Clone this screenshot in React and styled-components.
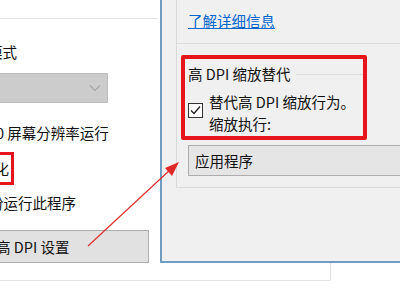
import React from "react";
import styled, { createGlobalStyle } from "styled-components";

const GlobalStyle = createGlobalStyle`
	html, body {
		margin: 0;
		padding: 0;
		background: #fff;
		overflow: hidden;
	}
	body {
		font-family: "Noto Sans CJK SC", "Noto Sans", sans-serif;
		color: #111;
	}
`;

const Page = styled.div`
	position: relative;
	width: 400px;
	height: 300px;
	overflow: hidden;
	display: flex;
	flex-direction: column;
	background: #fff;
	font-size: 14.5px;
`;

const Main = styled.div`
	display: flex;
	height: 263px;
`;

const LeftWindow = styled.div`
	width: 160px;
	flex-shrink: 0;
	display: flex;
	flex-direction: column;
	background: #fff;
`;

const TopRule = styled.div`
	width: 158px;
	height: 18px;
	border-bottom: 1px solid #e3e3e3;
`;

const Line = styled.div`
	height: 20px;
	line-height: 20px;
	white-space: nowrap;
	margin-top: ${(p) => p.$top}px;
	margin-left: ${(p) => p.$left}px;
`;

const DisabledSelect = styled.div`
	margin-top: 11px;
	margin-left: -10px;
	width: 118px;
	height: 30px;
	box-sizing: border-box;
	background: #cccccc;
	border: 1px solid #bdbdbd;
	display: flex;
	align-items: center;
	justify-content: flex-end;
	padding-right: 6px;
`;

const LeftMark = styled.div`
	margin-top: 9px;
	margin-left: -30px;
	width: 44px;
	height: 33px;
	box-sizing: border-box;
	border: 3px solid #e8141b;
	display: flex;
	align-items: center;
	justify-content: flex-end;
	padding-right: 2px;
	white-space: nowrap;
	overflow: hidden;
`;

const WideButton = styled.div`
	margin-top: 17px;
	margin-left: -50px;
	width: 199px;
	height: 33px;
	box-sizing: border-box;
	background: #e1e1e1;
	border: 1px solid #adadad;
	display: flex;
	align-items: center;
	padding-left: 16px;
	white-space: nowrap;
`;

const RightWindow = styled.div`
	flex: 1;
	box-sizing: border-box;
	background: #f0f0f0;
	border-left: 2px solid #6f9cc0;
	border-bottom: 2px solid #6f9cc0;
	overflow: hidden;
`;

const Group = styled.div`
	margin-left: 14px;
	border-left: 1px solid #d9d9d9;
	border-bottom: 1px solid #d9d9d9;
	padding-bottom: 11px;
`;

const LinkRow = styled.div`
	height: 44px;
	box-sizing: border-box;
	padding: 10px 0 0 11px;
	border-bottom: 1px solid #dcdcdc;
`;

const Link = styled.a`
	color: #0066cc;
	text-decoration: underline;
	line-height: 20px;
	cursor: pointer;
`;

const RedFrame = styled.div`
	margin: 11px 0 0 4px;
	width: 186px;
	height: 85px;
	box-sizing: border-box;
	border: 4px solid #e8141b;
	border-radius: 2px;
	padding: 5px 0 0 3px;
`;

const GroupTitle = styled.div`
	display: flex;
	align-items: center;
	height: 20px;
	line-height: 20px;
	white-space: nowrap;

	&::after {
		content: "";
		flex: 1;
		height: 1px;
		margin-left: 6px;
		background: #dcdcdc;
	}
`;

const CheckRow = styled.div`
	display: flex;
	align-items: flex-start;
	margin-top: 7px;
`;

const CheckBox = styled.div`
	width: 15px;
	height: 15px;
	flex-shrink: 0;
	box-sizing: border-box;
	margin-top: 12px;
	border: 1px solid #333;
	background: #fff;
	display: flex;
	align-items: center;
	justify-content: center;
`;

const CheckText = styled.div`
	margin-left: 6px;
	line-height: 22px;
	white-space: nowrap;
`;

const ModeSelect = styled.div`
	margin: 5px -20px 0 11px;
	height: 31px;
	box-sizing: border-box;
	background: #e5e5e5;
	border: 1px solid #adadad;
	display: flex;
	align-items: center;
	padding-left: 6px;
`;

const BottomStrip = styled.div`
	height: 37px;
`;

const BackButtonEdge = styled.div`
	width: 330px;
	height: 17px;
	border-right: 1px solid #e2e2e2;
	border-bottom: 1px solid #e2e2e2;
`;

const ArrowLayer = styled.svg`
	position: absolute;
	left: 0;
	top: 0;
	pointer-events: none;
`;

export default function App() {
	return (
		<>
			<GlobalStyle />
			<Page>
				<Main>
					<LeftWindow>
						<TopRule />
						<Line $top={23} $left={-12}>模式</Line>
						<DisabledSelect>
							<svg width="12" height="8" viewBox="0 0 12 8">
								<path d="M1 1.5 L6 6.5 L11 1.5" fill="none" stroke="#a8a8a8" strokeWidth="1.2" />
							</svg>
						</DisabledSelect>
						<Line $top={20} $left={-4}>0 屏幕分辨率运行</Line>
						<LeftMark>优化</LeftMark>
						<Line $top={8} $left={-11}>份运行此程序</Line>
						<WideButton>更改高 DPI 设置</WideButton>
					</LeftWindow>
					<RightWindow>
						<Group>
							<LinkRow>
								<Link>了解详细信息</Link>
							</LinkRow>
							<RedFrame>
								<GroupTitle>高 DPI 缩放替代</GroupTitle>
								<CheckRow>
									<CheckBox>
										<svg width="13" height="13" viewBox="0 0 13 13">
											<path d="M2 6.5 L5 9.5 L11 2.5" fill="none" stroke="#222" strokeWidth="1.3" />
										</svg>
									</CheckBox>
									<CheckText>
										替代高 DPI 缩放行为。
										<br />
										缩放执行:
									</CheckText>
								</CheckRow>
							</RedFrame>
							<ModeSelect>应用程序</ModeSelect>
						</Group>
					</RightWindow>
				</Main>
				<BottomStrip>
					<BackButtonEdge />
				</BottomStrip>
				<ArrowLayer width="400" height="300" viewBox="0 0 400 300">
					<line x1="88" y1="246" x2="171" y2="169" stroke="#e02828" strokeWidth="1.1" />
					<polygon points="179,162 165,168 172,176" fill="#e02828" />
				</ArrowLayer>
			</Page>
		</>
	);
}
